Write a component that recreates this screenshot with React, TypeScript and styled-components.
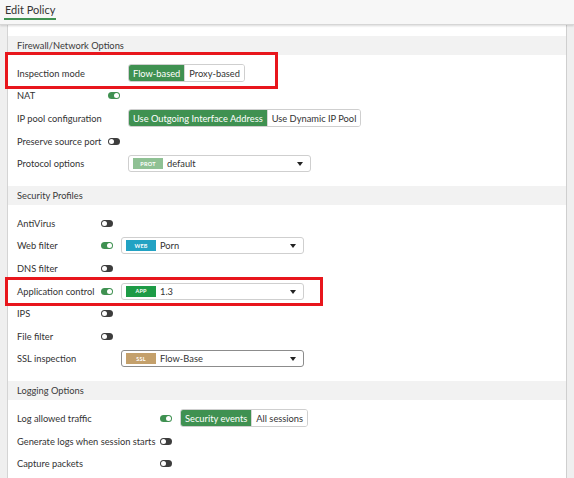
import React from 'react';
import styled, { createGlobalStyle } from 'styled-components';

const Global = createGlobalStyle`
  html, body {
    margin: 0;
    padding: 0;
    background: #f0f0f0;
  }
  body {
    font-family: Lato, "Open Sans", "Liberation Sans", sans-serif;
    font-size: 9.3px;
    color: #333;
  }
`;

const GREEN = '#3f9151';

const Root = styled.div`
  width: 574px;
  height: 478px;
  overflow: hidden;
  display: flex;
  flex-direction: column;
`;

const Header = styled.div`
  height: 24px;
  flex: none;
  background: #f7f7f7;
  border-bottom: 1px solid #d6d6d6;
  box-shadow: 0 1px 2px rgba(0, 0, 0, 0.15);
  display: flex;
  align-items: flex-start;
  padding-left: 4px;
  position: relative;
  z-index: 1;
`;

const Tab = styled.div`
  font-size: 11px;
  color: #333;
  padding: 3px 1px 2px;
  border-bottom: 2px solid ${GREEN};
`;

const Body = styled.div`
  flex: 1;
  display: flex;
  padding: 0 7px;
  background: #efefef;
`;

const Panel = styled.div`
  flex: 1;
  background: #fff;
  border-left: 1px solid #d4d4d4;
  border-right: 1px solid #cfcfcf;
  padding-top: 11px;
`;

const SectionTitle = styled.div<{ $top?: number }>`
  height: 19px;
  line-height: 19px;
  background: #f2f2f2;
  padding-left: 9px;
  margin-top: ${p => p.$top ?? 0}px;
  margin-bottom: 7px;
  color: #3a3a3a;
`;

const Row = styled.div`
  height: 22.6px;
  display: flex;
  align-items: center;
  padding-left: 9px;
`;

const Label = styled.div<{ $w: number }>`
  width: ${p => p.$w}px;
  flex: none;
  white-space: nowrap;
`;

const Slot = styled.div`
  width: 20px;
  flex: none;
  display: flex;
  align-items: center;
`;

const Highlight = styled.div<{ $w: number; $top: number; $bottom: number }>`
  position: relative;
  &::after {
    content: '';
    position: absolute;
    box-sizing: border-box;
    left: -3px;
    top: ${p => p.$top}px;
    bottom: ${p => p.$bottom}px;
    width: ${p => p.$w}px;
    border: 3px solid #e8161c;
    pointer-events: none;
  }
`;

const Toggle = styled.span<{ $on?: boolean }>`
  display: inline-block;
  width: 12px;
  height: 7px;
  border-radius: 4px;
  background: ${p => (p.$on ? GREEN : '#3d3d3d')};
  position: relative;
  &::after {
    content: '';
    position: absolute;
    top: 1px;
    left: ${p => (p.$on ? '6px' : '1px')};
    width: 5px;
    height: 5px;
    border-radius: 50%;
    background: #fff;
  }
`;

const Segmented = styled.div`
  display: inline-flex;
  height: 18px;
  border: 1px solid #cfcfcf;
  border-radius: 3px;
  overflow: hidden;
  box-sizing: border-box;
`;

const SegButton = styled.div<{ $active?: boolean }>`
  display: flex;
  align-items: center;
  padding: 0 4px;
  white-space: nowrap;
  background: ${p => (p.$active ? GREEN : '#fff')};
  color: ${p => (p.$active ? '#fff' : '#333')};
  & + & {
    border-left: 1px solid #d6d6d6;
  }
`;

const Select = styled.div<{ $dark?: boolean }>`
  width: 183px;
  height: 17px;
  box-sizing: border-box;
  border: 1px solid ${p => (p.$dark ? '#8c8c8c' : '#cfcfcf')};
  border-radius: 3px;
  display: flex;
  align-items: center;
  padding-left: 4px;
  position: relative;
  background: #fff;
`;

const Badge = styled.span<{ $bg: string }>`
  width: 30px;
  height: 11px;
  background: ${p => p.$bg};
  color: #fff;
  font-size: 5.5px;
  font-weight: 700;
  display: flex;
  align-items: center;
  justify-content: center;
  margin-right: 4px;
  letter-spacing: 0.2px;
`;

const Caret = styled.span`
  position: absolute;
  right: 7px;
  top: 6px;
  width: 0;
  height: 0;
  border-left: 3px solid transparent;
  border-right: 3px solid transparent;
  border-top: 4px solid #222;
`;

const ProfileSelect = ({ tag, bg, value, dark }: { tag: string; bg: string; value: string; dark?: boolean }) => (
  <Select $dark={dark}>
    <Badge $bg={bg}>{tag}</Badge>
    {value}
    <Caret />
  </Select>
);

export default function App() {
  return (
    <Root>
      <Global />
      <Header>
        <Tab>Edit Policy</Tab>
      </Header>
      <Body>
        <Panel>
          <SectionTitle>Firewall/Network Options</SectionTitle>
          <Highlight $w={273} $top={-10} $bottom={-4}>
            <Row>
              <Label $w={91}>Inspection mode</Label>
              <Slot />
              <Segmented>
                <SegButton $active>Flow-based</SegButton>
                <SegButton>Proxy-based</SegButton>
              </Segmented>
            </Row>
          </Highlight>
          <Row>
            <Label $w={91}>NAT</Label>
            <Slot>
              <Toggle $on />
            </Slot>
          </Row>
          <Row>
            <Label $w={91}>IP pool configuration</Label>
            <Slot />
            <Segmented>
              <SegButton $active>Use Outgoing Interface Address</SegButton>
              <SegButton>Use Dynamic IP Pool</SegButton>
            </Segmented>
          </Row>
          <Row>
            <Label $w={91}>Preserve source port</Label>
            <Slot>
              <Toggle />
            </Slot>
          </Row>
          <Row>
            <Label $w={91}>Protocol options</Label>
            <Slot />
            <ProfileSelect tag="PROT" bg="#8fc194" value="default" />
          </Row>

          <SectionTitle $top={11}>Security Profiles</SectionTitle>
          <Row>
            <Label $w={84}>AntiVirus</Label>
            <Slot>
              <Toggle />
            </Slot>
          </Row>
          <Row>
            <Label $w={84}>Web filter</Label>
            <Slot>
              <Toggle $on />
            </Slot>
            <ProfileSelect tag="WEB" bg="#22a2c3" value="Porn" />
          </Row>
          <Row>
            <Label $w={84}>DNS filter</Label>
            <Slot>
              <Toggle />
            </Slot>
          </Row>
          <Highlight $w={318} $top={-3} $bottom={-4}>
            <Row>
              <Label $w={84}>Application control</Label>
              <Slot>
                <Toggle $on />
              </Slot>
              <ProfileSelect tag="APP" bg="#1d9b46" value="1.3" />
            </Row>
          </Highlight>
          <Row>
            <Label $w={84}>IPS</Label>
            <Slot>
              <Toggle />
            </Slot>
          </Row>
          <Row>
            <Label $w={84}>File filter</Label>
            <Slot>
              <Toggle />
            </Slot>
          </Row>
          <Row>
            <Label $w={84}>SSL inspection</Label>
            <Slot />
            <ProfileSelect tag="SSL" bg="#c4a06b" value="Flow-Base" dark />
          </Row>

          <SectionTitle $top={11}>Logging Options</SectionTitle>
          <Row>
            <Label $w={143}>Log allowed traffic</Label>
            <Slot>
              <Toggle $on />
            </Slot>
            <Segmented>
              <SegButton $active>Security events</SegButton>
              <SegButton>All sessions</SegButton>
            </Segmented>
          </Row>
          <Row>
            <Label $w={143}>Generate logs when session starts</Label>
            <Slot>
              <Toggle />
            </Slot>
          </Row>
          <Row>
            <Label $w={143}>Capture packets</Label>
            <Slot>
              <Toggle />
            </Slot>
          </Row>
        </Panel>
      </Body>
    </Root>
  );
}
